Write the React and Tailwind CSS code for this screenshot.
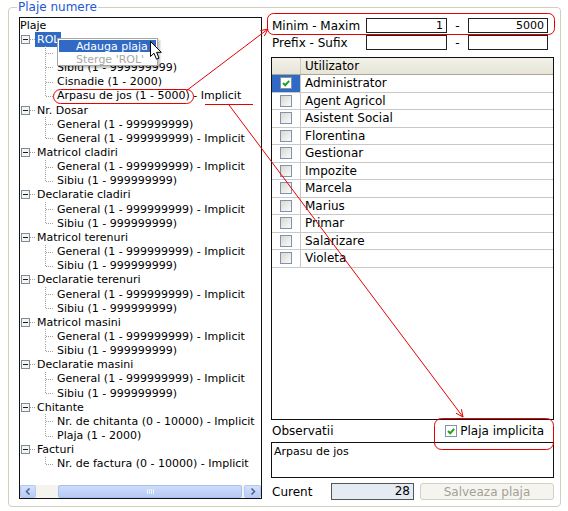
import React from 'react';

// tree content: l = level, t = label
const groups = [
  ['ROL', ['General (1 - 100)', 'Sibiu (1 - 999999999)', 'Cisnadie (1 - 2000)', 'Arpasu de jos (1 - 5000) - Implicit']],
  ['Nr. Dosar', ['General (1 - 999999999)', 'General (1 - 999999999) - Implicit']],
  ['Matricol cladiri', ['General (1 - 999999999) - Implicit', 'Sibiu (1 - 999999999)']],
  ['Declaratie cladiri', ['General (1 - 999999999) - Implicit', 'Sibiu (1 - 999999999)']],
  ['Matricol terenuri', ['General (1 - 999999999) - Implicit', 'Sibiu (1 - 999999999)']],
  ['Declaratie terenuri', ['General (1 - 999999999) - Implicit', 'Sibiu (1 - 999999999)']],
  ['Matricol masini', ['General (1 - 999999999) - Implicit', 'Sibiu (1 - 999999999)']],
  ['Declaratie masini', ['General (1 - 999999999) - Implicit', 'Sibiu (1 - 999999999)']],
  ['Chitante', ['Nr. de chitanta (0 - 10000) - Implicit', 'Plaja (1 - 2000)']],
  ['Facturi', ['Nr. de factura (0 - 10000) - Implicit']],
];

const users = [
  'Administrator', 'Agent Agricol', 'Asistent Social', 'Florentina', 'Gestionar',
  'Impozite', 'Marcela', 'Marius', 'Primar', 'Salarizare', 'Violeta',
];

const Expander = () => (
  <svg width="9" height="9" viewBox="0 0 9 9" className="ml-[1px] shrink-0">
    <rect x="0.5" y="0.5" width="8" height="8" fill="#f4f4f0" stroke="#7d8c9b" />
    <line x1="2" y1="4.5" x2="7" y2="4.5" stroke="#1a1a1a" />
  </svg>
);

const Connector = ({ last }) => (
  <svg width="10" height="14" viewBox="0 0 10 14" preserveAspectRatio="none" className="shrink-0 h-full">
    <line x1="0.5" y1="0" x2="0.5" y2={last ? 7.5 : 14} stroke="#a0a0a0" strokeDasharray="1 1" />
    <line x1="1" y1="7.5" x2="9" y2="7.5" stroke="#a0a0a0" strokeDasharray="1 1" />
  </svg>
);

const Checkbox = ({ checked }) => (
  <span
    className={`w-[12px] h-[12px] border border-[#7f93ae] flex items-center justify-center ${
      checked ? 'bg-white' : 'bg-linear-to-br from-[#d9d9d3] to-[#fafaf8]'
    }`}
  >
    {checked && (
      <svg width="10" height="10" viewBox="0 0 10 10">
        <path d="M2 5 L4.2 7.2 L8.2 2.8" fill="none" stroke="#21a121" strokeWidth="2" />
      </svg>
    )}
  </span>
);

function Tree() {
  return (
    <div className="w-[243px] h-[482px] border border-[#111] bg-white flex flex-col text-[11px] leading-none text-black">
      <div className="flex-1">
        <div className="h-[14.16px] flex items-center">Plaje</div>
        {groups.map(([name, kids]) => (
          <div key={name}>
            <div className="h-[14.16px] flex items-center">
              <Expander />
              <svg width="5" height="1" className="shrink-0">
                <line x1="0" y1="0.5" x2="5" y2="0.5" stroke="#a0a0a0" strokeDasharray="1 1" />
              </svg>
              {name === 'ROL' ? (
                <span className="px-[2px] py-[2px] bg-[#316ac5] text-white">{name}</span>
              ) : (
                <span className="ml-[2px] whitespace-nowrap">{name}</span>
              )}
            </div>
            {kids.map((k, i) => (
              <div key={i} className="h-[14.16px] flex items-center">
                <span className="w-[25px] shrink-0" />
                <Connector last={i === kids.length - 1} />
                <span className="ml-[2px] whitespace-nowrap">{k}</span>
              </div>
            ))}
          </div>
        ))}
      </div>
      {/* horizontal scrollbar */}
      <div className="h-[13px] flex bg-[#f4f3ee]">
        <div className="w-[16px] h-full rounded-[2px] border border-[#b4c8f2] bg-linear-to-b from-[#d3e0fd] to-[#b8cbf6] flex items-center justify-center">
          <svg width="6" height="7" viewBox="0 0 6 7">
            <path d="M4.5 0.5 L1.5 3.5 L4.5 6.5" fill="none" stroke="#4d6185" strokeWidth="1.5" />
          </svg>
        </div>
        <div className="w-[22px]" />
        <div className="w-[184px] h-full rounded-[2px] border border-[#a9bfee] bg-linear-to-b from-[#cddcfb] to-[#b7cbf5] flex items-center justify-center gap-[1px]">
          <span className="w-[1px] h-[5px] bg-[#eef3fe]" />
          <span className="w-[1px] h-[5px] bg-[#eef3fe]" />
          <span className="w-[1px] h-[5px] bg-[#eef3fe]" />
          <span className="w-[1px] h-[5px] bg-[#eef3fe]" />
        </div>
        <div className="w-[2px]" />
        <div className="w-[17px] h-full rounded-[2px] border border-[#b4c8f2] bg-linear-to-b from-[#d3e0fd] to-[#b8cbf6] flex items-center justify-center">
          <svg width="6" height="7" viewBox="0 0 6 7">
            <path d="M1.5 0.5 L4.5 3.5 L1.5 6.5" fill="none" stroke="#4d6185" strokeWidth="1.5" />
          </svg>
        </div>
      </div>
    </div>
  );
}

const Field = ({ value, w }) => (
  <div className={`${w} h-full border border-[#222] bg-white text-right pr-[3px] text-[11px] leading-[13px]`}>{value}</div>
);

function RightPanel() {
  return (
    <div className="ml-[9px] w-[283px] pt-[1px] flex flex-col text-[12px] text-black">
      <div className="h-[15px] flex items-center">
        <span className="w-[95px] pl-[1px]">Minim - Maxim</span>
        <Field value="1" w="w-[81px]" />
        <span className="w-[21px] text-center">-</span>
        <Field value="5000" w="w-[80px]" />
      </div>
      <div className="mt-[2px] h-[15px] flex items-center">
        <span className="w-[95px] pl-[1px]">Prefix - Sufix</span>
        <Field value="" w="w-[81px]" />
        <span className="w-[21px] text-center">-</span>
        <Field value="" w="w-[80px]" />
      </div>

      <div className="mt-[7px] h-[363px] border border-[#111] bg-white flex flex-col">
        <div className="h-[17px] flex bg-linear-to-b from-[#f3f2ea] to-[#e6e4d6] border-b border-[#aaa796]">
          <div className="w-[29px] border-r border-[#cfccbd]" />
          <div className="pl-[4px] flex items-center">Utilizator</div>
        </div>
        {users.map((u, i) => (
          <div key={u} className="h-[17.5px] flex border-b border-[#c8c8c8]">
            <div className={`w-[29px] border-r border-[#c8c8c8] flex items-center justify-center ${i === 0 ? 'bg-[#316ac5]' : ''}`}>
              <Checkbox checked={i === 0} />
            </div>
            <div className="pl-[4px] flex items-center">{u}</div>
          </div>
        ))}
      </div>

      <div className="h-[22px] flex items-center justify-between">
        <span className="pl-[1px]">Observatii</span>
        <span className="flex items-center gap-[3px] pr-[10px]">
          <Checkbox checked />
          <span>Plaja implicita</span>
        </span>
      </div>
      <div className="h-[36px] border border-[#111] bg-white pl-[2px] pt-[2px] text-[11px] leading-[13px]">Arpasu de jos</div>

      <div className="mt-[5px] h-[17px] flex items-center">
        <span className="w-[60px] pl-[1px]">Curent</span>
        <div className="w-[83px] h-full border border-[#555] bg-[#e4ebf2] text-right pr-[3px] text-[12px] leading-[15px]">28</div>
        <button className="ml-[6px] w-[134px] h-full bg-[#f5f4ef] border border-[#d3d1c3] rounded-[3px] text-[12px] leading-none text-[#a3a197]">
          Salveaza plaja
        </button>
      </div>
    </div>
  );
}

export default function App() {
  return (
    <div className="relative w-[568px] h-[511px] bg-white overflow-hidden pt-[7px] pl-[8px] font-['DejaVu_Sans',sans-serif]">
      <div className="relative w-[553px] h-[500px] border border-[#d0d0bf] rounded-[4px] flex pl-[10px] pt-[9px]">
        <span className="absolute left-[8px] top-[-8px] px-[1px] bg-white text-[12px] leading-[14px] text-[#2457d3]">Plaje numere</span>
        <Tree />
        <RightPanel />
      </div>

      {/* context menu over the tree */}
      <div className="absolute left-[57px] top-[38px] w-[101px] border border-[#a7a6a0] bg-white shadow-[2px_2px_2px_rgba(0,0,0,0.25)] text-[11px] leading-none">
        <div className="mx-[1px] mt-[1px] h-[12px] bg-[#316ac5] text-white pl-[17px] flex items-center">Adauga plaja</div>
        <div className="mt-[1px] h-[12px] pl-[18px] text-[#a8a8a8] flex items-center">Sterge 'ROL'</div>
      </div>

      {/* mouse pointer */}
      <svg className="absolute left-[150px] top-[41px]" width="13" height="20" viewBox="0 0 13 20">
        <path d="M0.5 0.5 L0.5 15.5 L4 12.2 L6.5 18.2 L9 17.2 L6.6 11.3 L11.3 11.3 Z" fill="#fff" stroke="#000" />
      </svg>

      {/* red annotations */}
      <svg className="absolute left-0 top-0 pointer-events-none" width="568" height="511" viewBox="0 0 568 511">
        <g fill="none" stroke="#e60000" strokeWidth="1">
          <rect x="267.5" y="13.5" width="287" height="21" rx="6" />
          <rect x="434.5" y="418.5" width="119" height="31" rx="7" />
          <rect x="53.5" y="89.5" width="140" height="14" rx="7" />
          <line x1="205" y1="104.5" x2="253" y2="104.5" />
          <line x1="186" y1="91" x2="268" y2="29" />
          <polyline points="260.2,30.7 268,29 264.3,36.1" />
          <line x1="229" y1="105" x2="463" y2="417" />
          <polyline points="461.4,409.2 463,417 455.9,413.2" />
        </g>
      </svg>
    </div>
  );
}
